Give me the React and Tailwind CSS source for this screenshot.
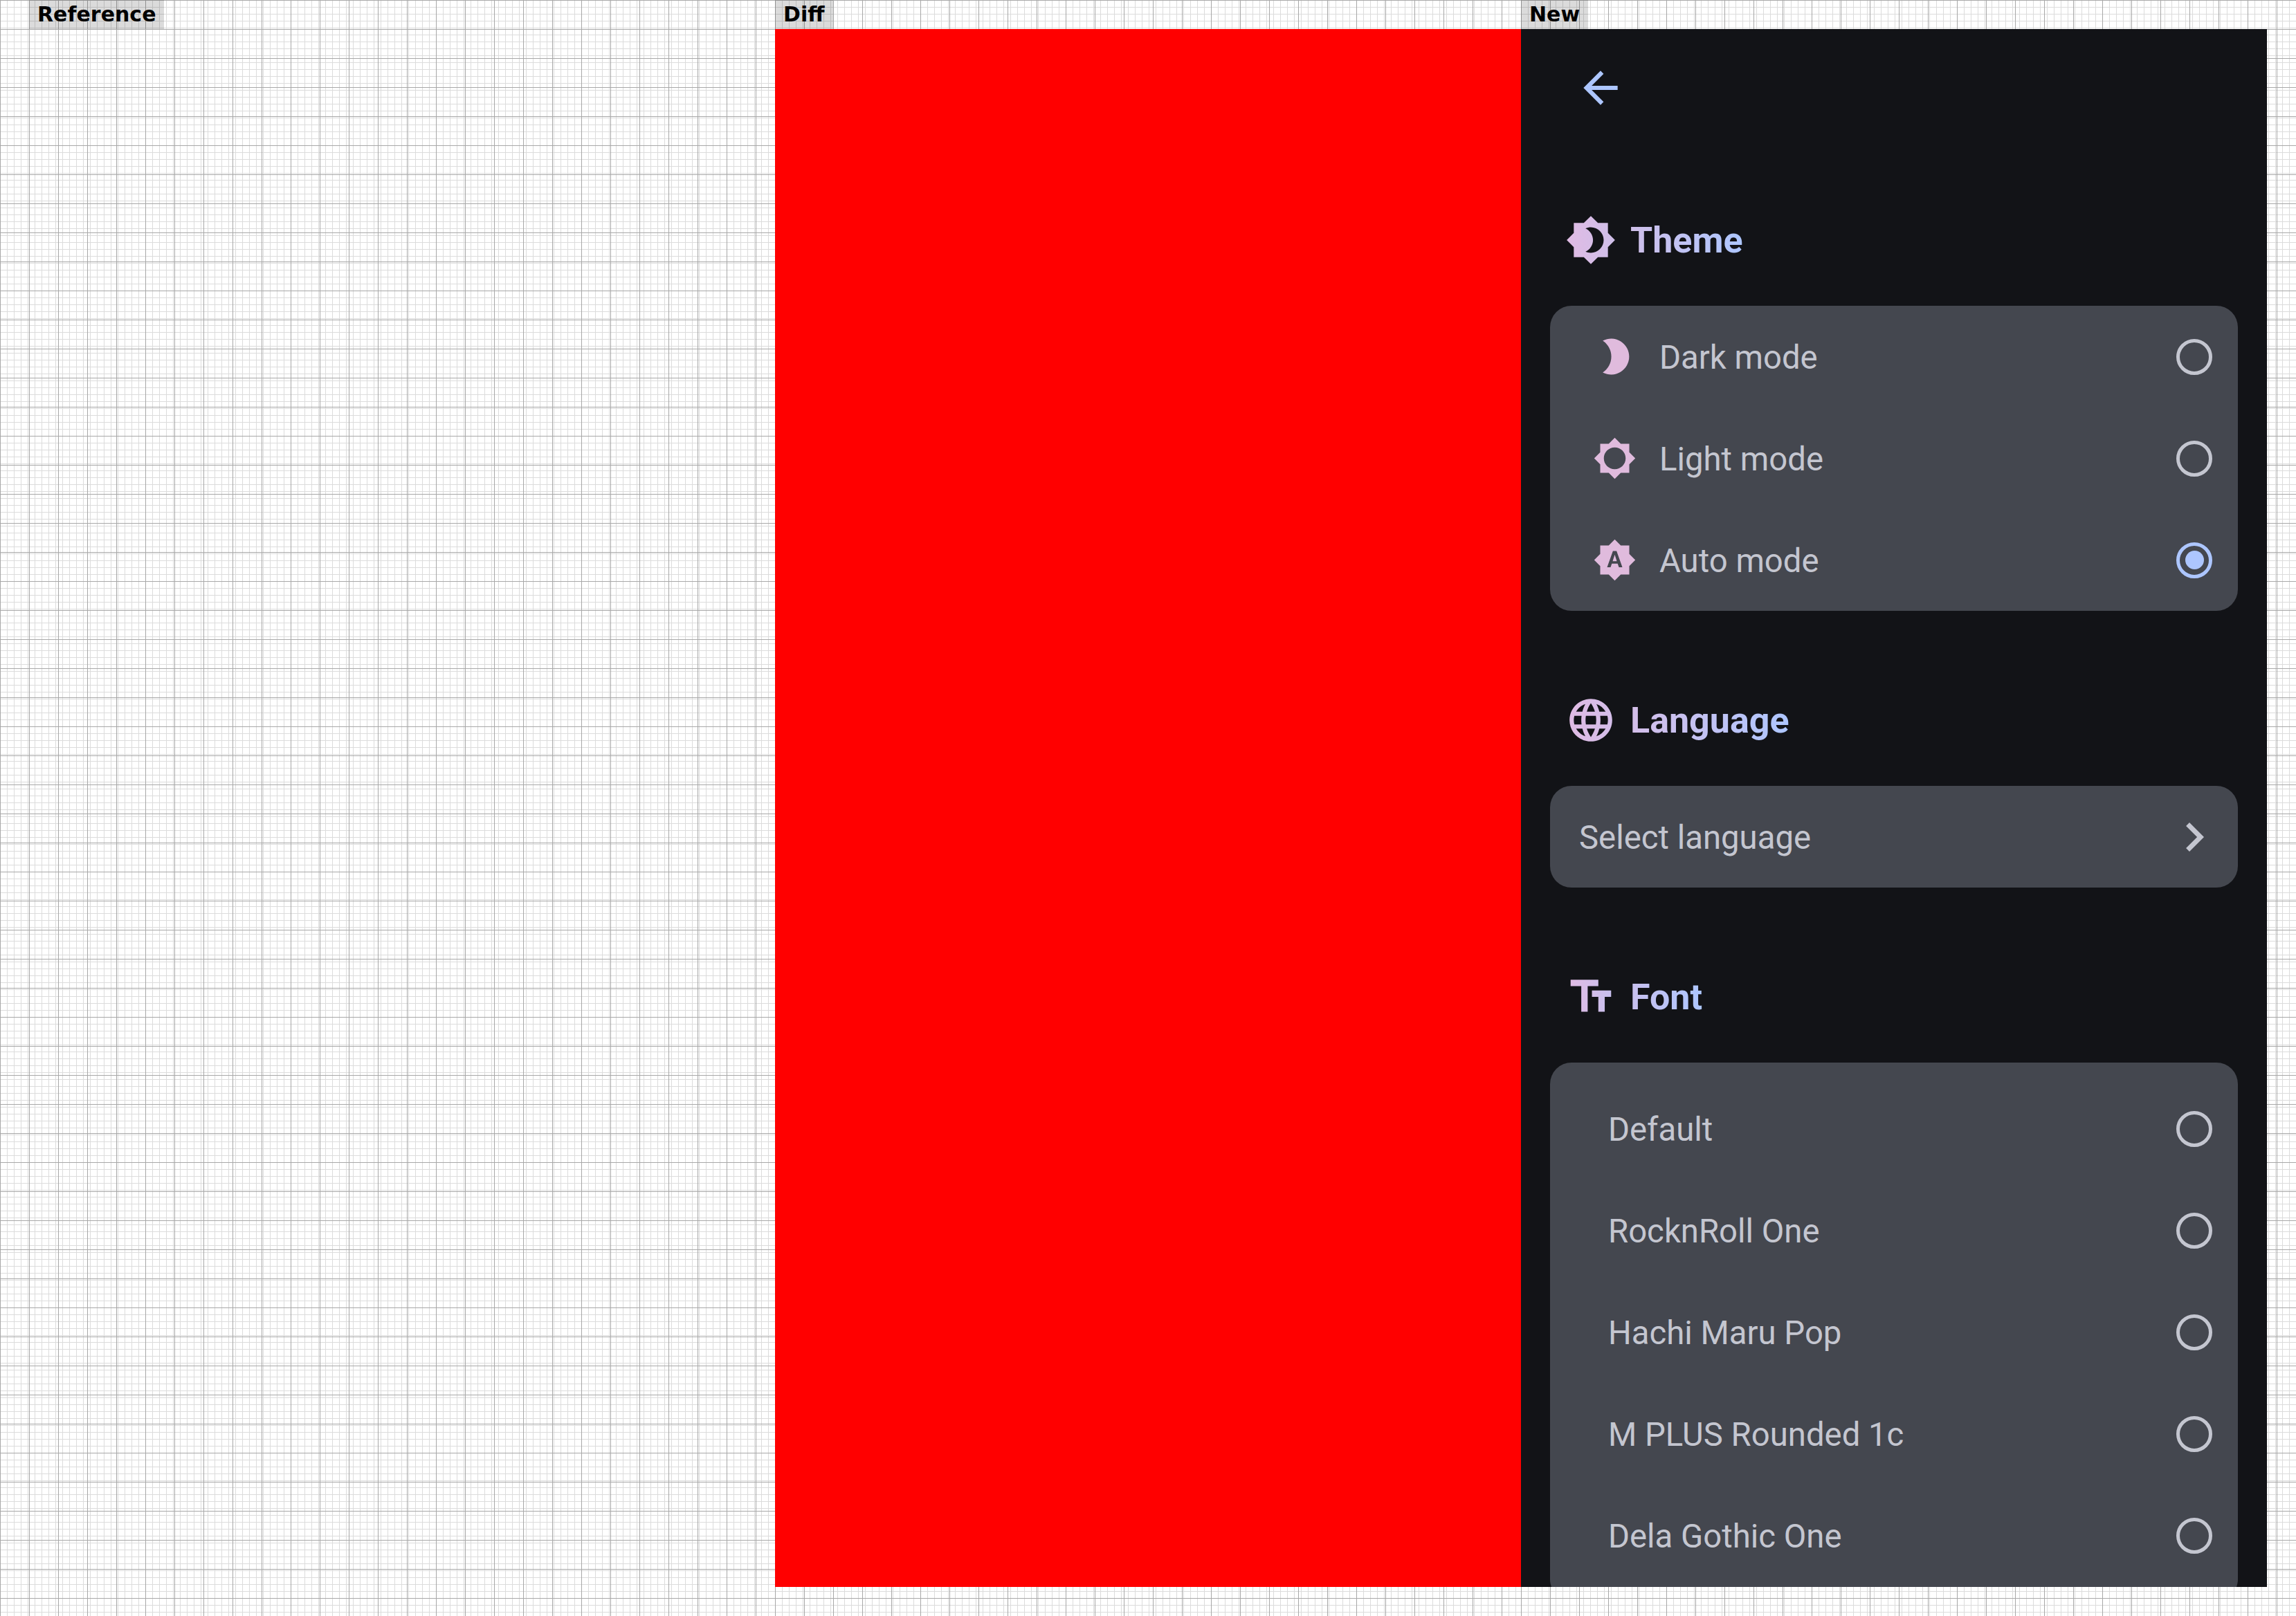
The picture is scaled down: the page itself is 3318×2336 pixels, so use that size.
import React from "react";

const PRIMARY = "#adc6ff";
const TERTIARY = "#e0bbe4";

const ICONS = {
  arrow: "M20 11H7.83l5.59-5.59L12 4l-8 8 8 8 1.41-1.41L7.83 13H20v-2z",
  chevron: "M10 6L8.59 7.41 13.17 12l-4.58 4.59L10 18l6-6z",
  theme:
    "M20 8.69V4h-4.69L12 .69 8.69 4H4v4.69L.69 12 4 15.31V20h4.69L12 23.31 15.31 20H20v-4.69L23.31 12 20 8.69zM12 18c-.89 0-1.74-.2-2.5-.55C11.56 16.5 13 14.42 13 12s-1.44-4.5-3.5-5.45C10.26 6.2 11.11 6 12 6c3.31 0 6 2.69 6 6s-2.69 6-6 6z",
  light:
    "M20 15.31L23.31 12 20 8.69V4h-4.69L12 .69 8.69 4H4v4.69L.69 12 4 15.31V20h4.69L12 23.31 15.31 20H20v-4.69zM12 18c-3.31 0-6-2.69-6-6s2.69-6 6-6 6 2.69 6 6-2.69 6-6 6z",
  auto: "M10.85 12.65h2.3L12 9l-1.15 3.65zM20 8.69V4h-4.69L12 .69 8.69 4H4v4.69L.69 12 4 15.31V20h4.69L12 23.31 15.31 20H20v-4.69L23.31 12 20 8.69zM14.3 16l-.7-2h-3.2l-.7 2H7.8L11 7h2l3.2 9h-1.9z",
  language:
    "M11.99 2C6.47 2 2 6.48 2 12s4.47 10 9.99 10C17.52 22 22 17.52 22 12S17.52 2 11.99 2zm6.93 6h-2.95c-.32-1.25-.78-2.45-1.38-3.56 1.84.63 3.37 1.91 4.33 3.56zM12 4.04c.83 1.2 1.48 2.53 1.91 3.96h-3.82c.43-1.43 1.08-2.76 1.91-3.96zM4.26 14C4.1 13.36 4 12.69 4 12s.1-1.36.26-2h3.38c-.08.66-.14 1.32-.14 2 0 .68.06 1.34.14 2H4.26zm.82 2h2.95c.32 1.25.78 2.45 1.38 3.56-1.84-.63-3.37-1.9-4.33-3.56zm2.95-8H5.08c.96-1.66 2.49-2.93 4.33-3.56C8.81 5.55 8.35 6.75 8.03 8zM12 19.96c-.83-1.2-1.48-2.53-1.91-3.96h3.82c-.43 1.43-1.08 2.76-1.91 3.96zM14.34 14H9.66c-.09-.66-.16-1.32-.16-2 0-.68.07-1.35.16-2h4.68c.09.65.16 1.32.16 2 0 .68-.07 1.34-.16 2zm.25 5.56c.6-1.11 1.06-2.31 1.38-3.56h2.95c-.96 1.65-2.49 2.93-4.33 3.56zM16.36 14c.08-.66.14-1.32.14-2 0-.68-.06-1.34-.14-2h3.38c.16.64.26 1.31.26 2s-.1 1.36-.26 2h-3.38z",
  font: "M2.5 4v3h5v12h3V7h5V4h-13zm19 5h-9v3h3v7h3v-7h3V9z",
};

function Icon({ d, fill, className, box = "0 0 24 24" }) {
  return (
    <svg viewBox={box} className={className} fill={fill}>
      <path d={d} />
    </svg>
  );
}

// the moon in the reference is fatter than the stock icon, so it has its own box
const MOON = { d: "M14.2 8.5A26 26 0 1 1 14.2 54.5A27.6 27.6 0 0 0 14.2 8.5z", box: "0 0 63 63" };

// icon + title share one gradient, so the icon only gets the first part of it
function SectionTitle({ icon, label, mid, textClass }) {
  const id = "grad-" + label;
  return (
    <div className="flex items-center h-[74px] pl-[64px]">
      <svg viewBox="0 0 24 24" className="w-[74px] h-[74px] shrink-0">
        <defs>
          <linearGradient id={id} x1="0" y1="0" x2="1" y2="0">
            <stop offset="0" stopColor={TERTIARY} />
            <stop offset="1" stopColor={mid} />
          </linearGradient>
        </defs>
        <path d={icon} fill={`url(#${id})`} />
      </svg>
      <span className={`ml-[20px] mt-[2px] text-[52px] font-bold bg-gradient-to-r bg-clip-text text-transparent ${textClass}`}>
        {label}
      </span>
    </div>
  );
}

function Radio({ selected }) {
  if (selected) {
    return (
      <span className="flex items-center justify-center w-[52px] h-[52px] rounded-full border-[5px] border-[#adc6ff]">
        <span className="w-[27px] h-[27px] rounded-full bg-[#adc6ff]" />
      </span>
    );
  }
  return <span className="w-[52px] h-[52px] rounded-full border-[5px] border-[#c4c6d0]" />;
}

function ThemeRow({ icon, box, label, selected }) {
  return (
    <div className="flex items-center h-[147px] pl-[62px] pr-[37px]">
      <Icon d={icon} box={box} fill="#e0bbdd" className="w-[63px] h-[63px] shrink-0" />
      <span className="ml-[33px] mt-[3px] flex-1 text-[47.3px] text-[#c4c6d0]">{label}</span>
      <Radio selected={selected} />
    </div>
  );
}

function FontRow({ label }) {
  return (
    <div className="flex items-center h-[147px] pl-[84px] pr-[37px]">
      <span className="mt-[3px] flex-1 text-[47.3px] text-[#c4c6d0]">{label}</span>
      <Radio />
    </div>
  );
}

function SettingsPage() {
  return (
    <div className="h-[2252px] overflow-hidden bg-[#121317] font-['Roboto',sans-serif]">
      <Icon d={ICONS.arrow} fill={PRIMARY} className="w-[74px] h-[74px] ml-[78px] mt-[48px]" />

      <div className="flex flex-col gap-[121px] mt-[146px]">
        <section>
          <SectionTitle icon={ICONS.theme} label="Theme" mid="#cfbfe9" textClass="from-[#cfbfe9] to-[#adc6ff]" />
          <div className="mt-[58px] mx-[42px] rounded-[31px] bg-[#44474f]">
            <ThemeRow icon={MOON.d} box={MOON.box} label="Dark mode" />
            <ThemeRow icon={ICONS.light} label="Light mode" />
            <ThemeRow icon={ICONS.auto} label="Auto mode" selected />
          </div>
        </section>

        <section>
          <SectionTitle icon={ICONS.language} label="Language" mid="#d4bee9" textClass="from-[#d4bee9] to-[#adc6ff]" />
          <div className="mt-[58px] mx-[42px] h-[147px] pl-[42px] pr-[37px] flex items-center rounded-[31px] bg-[#44474f]">
            <span className="mt-[3px] flex-1 text-[47.3px] text-[#c4c6d0]">Select language</span>
            <Icon d={ICONS.chevron} fill="#c4c6d0" className="w-[84px] h-[84px] -mr-[16px]" />
          </div>
        </section>

        <section>
          <SectionTitle icon={ICONS.font} label="Font" mid="#c8c0ee" textClass="from-[#c8c0ee] to-[#adc6ff]" />
          <div className="mt-[58px] mx-[42px] pt-[22px] pb-[21px] rounded-[31px] bg-[#44474f]">
            <FontRow label="Default" />
            <FontRow label="RocknRoll One" />
            <FontRow label="Hachi Maru Pop" />
            <FontRow label="M PLUS Rounded 1c" />
            <FontRow label="Dela Gothic One" />
          </div>
        </section>
      </div>
    </div>
  );
}

function Label({ children }) {
  return (
    <div className="self-start h-[42px] px-[12px] bg-[#00000024] font-['DejaVu_Sans',sans-serif] font-bold text-[30px] leading-[42px] text-black">
      {children}
    </div>
  );
}

const GRID =
  "flex flex-col h-[2336px] bg-white bg-[linear-gradient(to_right,#a8a8a8_1px,transparent_1px),linear-gradient(to_bottom,#a8a8a8_1px,transparent_1px),linear-gradient(to_right,#dcdcdc_1px,transparent_1px),linear-gradient(to_bottom,#dcdcdc_1px,transparent_1px)] bg-[size:42px_42px,42px_42px,10px_10px,10px_10px]";

export default function App() {
  return (
    <div className="flex w-[3318px] h-[2336px] overflow-hidden">
      <div className={`${GRID} w-[1120px] pl-[42px]`}>
        <Label>Reference</Label>
      </div>
      <div className={`${GRID} w-[1078px]`}>
        <Label>Diff</Label>
        <div className="h-[2252px] bg-[#ff0000]" />
      </div>
      <div className={`${GRID} w-[1120px] pr-[42px]`}>
        <Label>New</Label>
        <SettingsPage />
      </div>
    </div>
  );
}
